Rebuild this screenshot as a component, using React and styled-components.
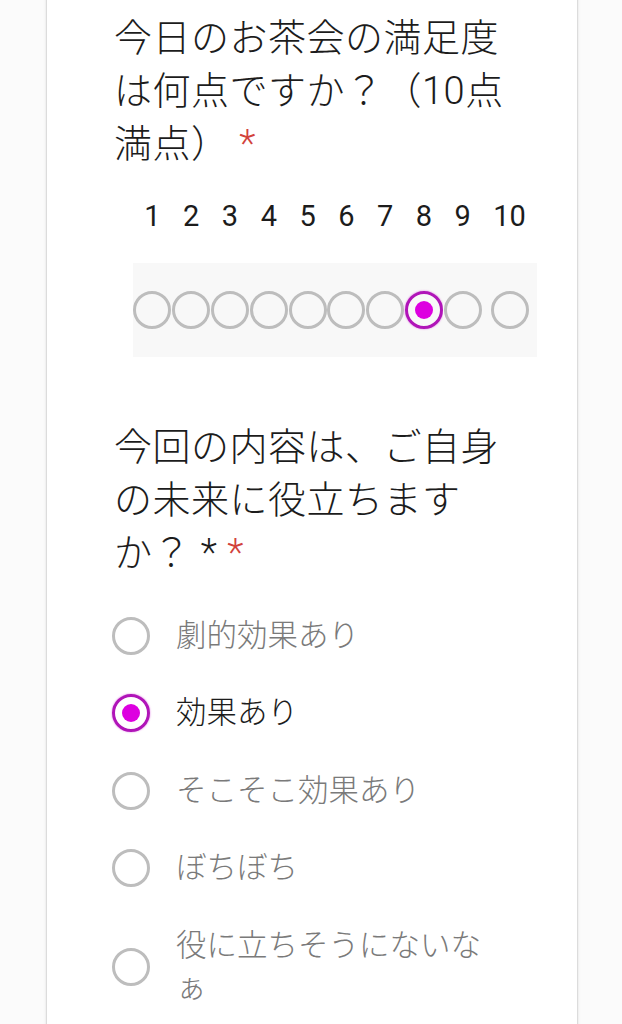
import React from 'react';
import styled, { createGlobalStyle } from 'styled-components';

const GlobalStyle = createGlobalStyle`
  html, body {
    margin: 0;
    padding: 0;
    background: #fbfbfb;
    overflow: hidden;
  }
  body {
    font-family: 'Roboto', 'Noto Sans CJK JP', sans-serif;
    color: #1c1c1c;
  }
`;

const Card = styled.div`
  margin: -10px 0 0 47px;
  width: 530px;
  min-height: 1060px;
  box-sizing: border-box;
  padding: 22px 0 0 67px;
  background: #fff;
  box-shadow: 0 0 2px rgba(0, 0, 0, 0.3), 0 0 5px rgba(0, 0, 0, 0.08);
`;

const Question = styled.section`
  margin-bottom: ${p => p.$gap || 0}px;
`;

const Title = styled.h2`
  margin: 0;
  width: 410px;
  font-size: 38px;
  letter-spacing: 0.5px;
  line-height: 53px;
  font-weight: 300;
  color: #1c1c1c;
`;

const Required = styled.span`
  color: #d2423b;
`;

const Scale = styled.div`
  margin: 30px 0 0 19px;
  width: 404px;
  display: grid;
  grid-template-columns: repeat(9, 38.8px) 1fr;
`;

const ScaleLabel = styled.div`
  height: 30px;
  display: flex;
  align-items: center;
  justify-content: center;
  font-size: 29px;
  color: #1c1c1c;
`;

const ScaleCell = styled.div`
  margin-top: 32px;
  height: 94px;
  background: #f8f8f8;
  display: flex;
  align-items: center;
  justify-content: center;
`;

const Radio = styled.span`
  flex: none;
  width: 38px;
  height: 38px;
  box-sizing: border-box;
  border-radius: 50%;
  border: 3.5px solid ${p => (p.$checked ? '#b014b8' : '#bdbdbd')};
  display: flex;
  align-items: center;
  justify-content: center;
  box-shadow: ${p => (p.$checked ? '0 0 2px rgba(200, 0, 210, 0.6)' : 'none')};

  &::after {
    content: '';
    display: ${p => (p.$checked ? 'block' : 'none')};
    width: 18px;
    height: 18px;
    border-radius: 50%;
    background: #dd00e0;
  }
`;

const Options = styled.div`
  margin: 17px 0 0 -2px;
  display: flex;
  flex-direction: column;
`;

const Option = styled.label`
  display: flex;
  align-items: center;
  gap: 26px;
  padding: 17.75px 0;
`;

const OptionText = styled.span`
  width: 318px;
  font-size: 30.5px;
  line-height: 42px;
  font-weight: 300;
  color: ${p => (p.$checked ? '#1c1c1c' : '#7a7a7a')};
`;

const scale = [1, 2, 3, 4, 5, 6, 7, 8, 9, 10];
const chosenScore = 8;

const options = [
  '劇的効果あり',
  '効果あり',
  'そこそこ効果あり',
  'ぼちぼち',
  '役に立ちそうにないなぁ',
];
const chosenOption = 1;

export default function App() {
  return (
    <>
      <GlobalStyle />
      <Card>
        <Question $gap={64}>
          <Title>
            今日のお茶会の満足度は何点ですか？（10点満点） <Required>*</Required>
          </Title>
          <Scale>
            {scale.map(n => (
              <ScaleLabel key={'l' + n}>{n}</ScaleLabel>
            ))}
            {scale.map(n => (
              <ScaleCell key={'c' + n}>
                <Radio $checked={n === chosenScore} />
              </ScaleCell>
            ))}
          </Scale>
        </Question>
        <Question>
          <Title>
            今回の内容は、ご自身の未来に役立ちますか？ * <Required>*</Required>
          </Title>
          <Options>
            {options.map((o, i) => (
              <Option key={o}>
                <Radio $checked={i === chosenOption} />
                <OptionText $checked={i === chosenOption}>{o}</OptionText>
              </Option>
            ))}
          </Options>
        </Question>
      </Card>
    </>
  );
}
